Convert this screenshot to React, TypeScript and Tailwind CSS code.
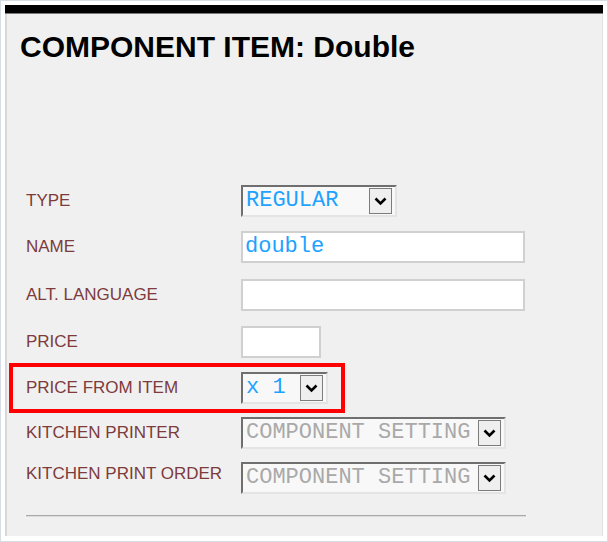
import type { ReactNode } from "react";

const LABEL = "text-[17px] text-[#7d3b3b] font-['Liberation_Sans',Arial,sans-serif]";
const MONO = "font-['Liberation_Mono','Courier_New',monospace] text-[22px]";

function Chevron() {
  return (
    <svg width="13" height="9" viewBox="0 0 13 9">
      <polyline
        points="1.5,1.5 6.5,6.5 11.5,1.5"
        fill="none"
        stroke="#000"
        strokeWidth="2.6"
      />
    </svg>
  );
}

function FakeSelect({
  width,
  value,
  muted,
}: {
  width: string;
  value: string;
  muted?: boolean;
}) {
  return (
    <div
      className={`${width} h-full flex items-center bg-[#f8f8f8] border-t-2 border-l-2 border-[#6f6f6f] border-r-2 border-b-2 border-r-[#e4e4e4] border-b-[#e4e4e4]`}
    >
      <div className="flex-1 min-w-0 h-full flex items-center overflow-x-clip">
        <span
          className={`${MONO} leading-[28px] pl-[3px] whitespace-nowrap ${
            muted ? "text-[#a9a9a9]" : "text-[#1ea2ff]"
          }`}
        >
          {value}
        </span>
      </div>
      <div className="w-[23px] h-[26px] mr-[3px] shrink-0 flex items-center justify-center bg-[#efefef] border border-[#7c7c7c]">
        <Chevron />
      </div>
    </div>
  );
}

function TextBox({ width, value }: { width: string; value?: string }) {
  return (
    <div
      className={`${width} h-full flex items-center bg-white border-2 border-[#d0d0d0] pl-[2px]`}
    >
      <span className={`${MONO} leading-[28px] text-[#1ea2ff]`}>{value}</span>
    </div>
  );
}

function Row({
  label,
  top,
  children,
  alignTop,
}: {
  label: string;
  top: string;
  children: ReactNode;
  alignTop?: boolean;
}) {
  return (
    <div className={`flex h-[32px] ${top} ${alignTop ? "items-start" : "items-center"}`}>
      <div className={`w-[215px] shrink-0 ${LABEL} ${alignTop ? "-mt-[1px]" : ""}`}>
        {label}
      </div>
      {children}
    </div>
  );
}

export default function App() {
  return (
    <div className="w-[608px] h-[542px] bg-white border border-[#d6dde3] pt-[4px] px-[4px] pb-[5px] flex flex-col">
      <div className="h-[9px] bg-black border-b border-[#7a7a7a]" />
      <div className="flex-1 bg-[#f0f0f0] border-l-2 border-[#d8d8d8] border-r border-r-[#e2e2e2]">
        <h1 className="pl-[13px] pt-[18px] text-[30px] leading-none font-bold text-black font-['Liberation_Sans',Arial,sans-serif]">
          COMPONENT ITEM: Double
        </h1>

        <div className="mt-[123px] pl-[19px]">
          <Row label="TYPE" top="">
            <FakeSelect width="w-[156px]" value="REGULAR" />
          </Row>
          <Row label="NAME" top="mt-[14px]">
            <TextBox width="w-[284px]" value="double" />
          </Row>
          <Row label="ALT. LANGUAGE" top="mt-[16px]">
            <TextBox width="w-[284px]" />
          </Row>
          <Row label="PRICE" top="mt-[15px]">
            <TextBox width="w-[80px]" />
          </Row>
          <div className="relative mt-[14px]">
            <Row label="PRICE FROM ITEM" top="">
              <FakeSelect width="w-[87px]" value="x 1" />
            </Row>
            {/* highlight box */}
            <div className="absolute left-[-17px] top-[-9px] w-[336px] h-[50px] border-[4px] border-[#ff0000] pointer-events-none" />
          </div>
          <Row label="KITCHEN PRINTER" top="mt-[13px]">
            <FakeSelect width="w-[265px]" value="COMPONENT SETTING" muted />
          </Row>
          <Row label="KITCHEN PRINT ORDER" top="mt-[13px]" alignTop>
            <FakeSelect width="w-[265px]" value="COMPONENT SETTING" muted />
          </Row>

          <div className="mt-[21px] w-[500px] border-t border-[#a9a9a9] border-b border-b-[#dcdcdc]" />
        </div>
      </div>
    </div>
  );
}
